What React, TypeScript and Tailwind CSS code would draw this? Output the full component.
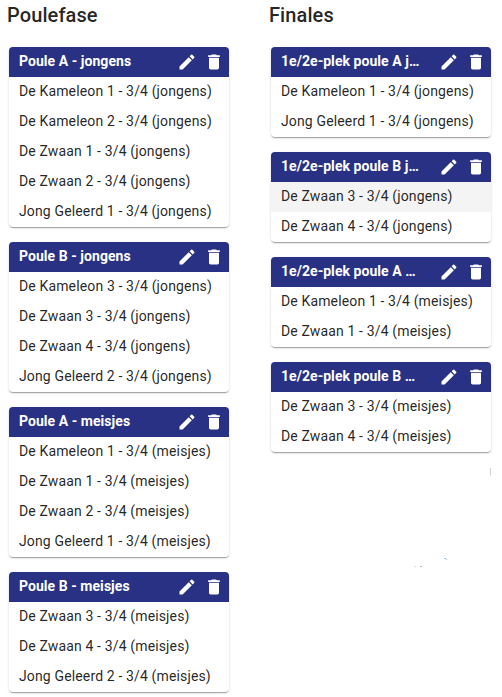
import React from 'react';

type Group = { title: string; rows: string[]; active?: number };

const poules: Group[] = [
  { title: 'Poule A - jongens', rows: ['De Kameleon 1 - 3/4 (jongens)', 'De Kameleon 2 - 3/4 (jongens)', 'De Zwaan 1 - 3/4 (jongens)', 'De Zwaan 2 - 3/4 (jongens)', 'Jong Geleerd 1 - 3/4 (jongens)'] },
  { title: 'Poule B - jongens', rows: ['De Kameleon 3 - 3/4 (jongens)', 'De Zwaan 3 - 3/4 (jongens)', 'De Zwaan 4 - 3/4 (jongens)', 'Jong Geleerd 2 - 3/4 (jongens)'] },
  { title: 'Poule A - meisjes', rows: ['De Kameleon 1 - 3/4 (meisjes)', 'De Zwaan 1 - 3/4 (meisjes)', 'De Zwaan 2 - 3/4 (meisjes)', 'Jong Geleerd 1 - 3/4 (meisjes)'] },
  { title: 'Poule B - meisjes', rows: ['De Zwaan 3 - 3/4 (meisjes)', 'De Zwaan 4 - 3/4 (meisjes)', 'Jong Geleerd 2 - 3/4 (meisjes)'] },
];

const finales: Group[] = [
  { title: '1e/2e-plek poule A j…', rows: ['De Kameleon 1 - 3/4 (jongens)', 'Jong Geleerd 1 - 3/4 (jongens)'] },
  { title: '1e/2e-plek poule B j…', rows: ['De Zwaan 3 - 3/4 (jongens)', 'De Zwaan 4 - 3/4 (jongens)'], active: 0 },
  { title: '1e/2e-plek poule A …', rows: ['De Kameleon 1 - 3/4 (meisjes)', 'De Zwaan 1 - 3/4 (meisjes)'] },
  { title: '1e/2e-plek poule B …', rows: ['De Zwaan 3 - 3/4 (meisjes)', 'De Zwaan 4 - 3/4 (meisjes)'] },
];

function Card({ group }: { group: Group }) {
  return (
    <section className="w-[220px] overflow-hidden rounded bg-white shadow-[0_2px_1px_-1px_rgba(0,0,0,0.2),0_1px_1px_0_rgba(0,0,0,0.14),0_1px_3px_0_rgba(0,0,0,0.12)]">
      <header className="flex h-[30px] items-center bg-[#283184] pl-2.5 pr-[5px] text-white">
        <h3 className="h-[30px] flex-1 whitespace-nowrap text-sm font-bold leading-[28px] tracking-[0.05px]">{group.title}</h3>
        <svg className="mr-[7px] size-5" viewBox="0 0 24 24" fill="currentColor">
          <path d="M3 17.25V21h3.75L17.81 9.94l-3.75-3.75L3 17.25zM20.71 7.04c.39-.39.39-1.02 0-1.41l-2.34-2.34a.9959.9959 0 0 0-1.41 0l-1.83 1.83 3.75 3.75 1.83-1.83z" />
        </svg>
        <svg className="size-5" viewBox="0 0 24 24" fill="currentColor">
          <path d="M6 19c0 1.1.9 2 2 2h8c1.1 0 2-.9 2-2V7H6v12zM19 4h-3.5l-1-1h-5l-1 1H5v2h14V4z" />
        </svg>
      </header>
      <ul>
        {group.rows.map((row, i) => (
          <li key={row} className={`h-[30px] whitespace-nowrap pl-2.5 text-sm leading-[28px] tracking-[0.14px] ${i === group.active ? 'bg-[#f4f4f4]' : ''}`}>{row}</li>
        ))}
      </ul>
    </section>
  );
}

function Column({ title, groups }: { title: string; groups: Group[] }) {
  return (
    <div className="w-[222px]">
      <h2 className="mb-4 h-[31px] text-xl font-medium leading-[31px] tracking-[0.1px]">{title}</h2>
      <div className="flex flex-col gap-[15px] pl-0.5">
        {groups.map((g) => <Card key={g.title} group={g} />)}
      </div>
    </div>
  );
}

export default function App() {
  return (
    <main className="relative flex h-[697px] w-[502px] gap-10 overflow-hidden bg-white pl-[7px] font-['Roboto',sans-serif] text-black/87">
      <Column title="Poulefase" groups={poules} />
      <Column title="Finales" groups={finales} />
      <svg className="absolute left-[410px] top-[464px]" width="84" height="106" fill="none">
        <path d="M79.5 4.5h1v7" stroke="#d4d4d4" />
        <path d="M34 94.5h2m0 1h1" stroke="#a9c3dc" />
        <path d="M4 102.5h2" stroke="#dddddd" />
        <path d="M10 102.5h2" stroke="#c8b0a8" />
      </svg>
    </main>
  );
}
